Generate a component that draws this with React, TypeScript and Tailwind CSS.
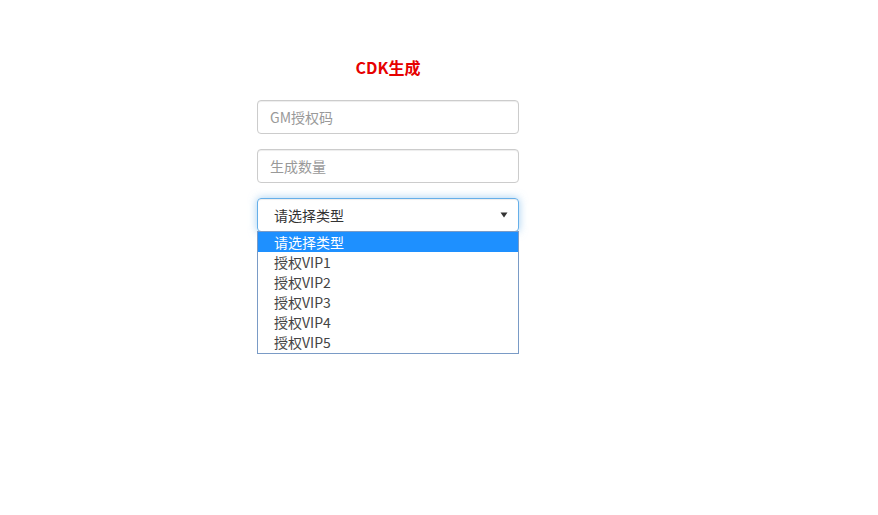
import React from "react";

const font = { fontFamily: '"Noto Sans CJK SC", "Noto Sans", sans-serif' };

export default function App() {
  const options = ["请选择类型", "授权VIP1", "授权VIP2", "授权VIP3", "授权VIP4", "授权VIP5"];
  return (
    <div className="min-h-[515px] w-[878px] bg-white font-['Noto_Sans_CJK_SC','Noto_Sans',sans-serif]">
      <div className="ml-[257px] w-[262px] pt-[57px]">
        <h1 className="m-0 h-[20px] text-center text-[16px] font-bold leading-[20px] text-[#e60000]">CDK生成</h1>
        <div className="mt-[23px] flex flex-col gap-[15px]">
          <input
            className="box-border h-[34px] w-full rounded-[4px] border border-[#cccccc] px-[12px] text-[14px] text-[#555] shadow-[inset_0_1px_1px_rgba(0,0,0,0.075)] outline-none placeholder:text-[#999]"
            placeholder="GM授权码"
          />
          <input
            className="box-border h-[34px] w-full rounded-[4px] border border-[#cccccc] px-[12px] text-[14px] text-[#555] shadow-[inset_0_1px_1px_rgba(0,0,0,0.075)] outline-none placeholder:text-[#999]"
            placeholder="生成数量"
          />
          <div className="relative">
            <div className="box-border flex h-[34px] w-full items-center justify-between rounded-[4px] border border-[#66afe9] pl-[16px] pr-[10px] text-[14px] text-[#333] shadow-[inset_0_1px_1px_rgba(0,0,0,0.075),0_0_8px_rgba(102,175,233,0.6)]">
              <span>请选择类型</span>
              <svg width="8" height="6" viewBox="0 0 8 6">
                <path d="M0.5 0.5 L7.5 0.5 L4 5.5 Z" fill="#333" />
              </svg>
            </div>
            <ul className="absolute left-0 top-[33px] m-0 box-border w-full list-none border border-[#7a9bc6] bg-white p-0 pb-[1px]">
              {options.map((o, i) => (
                <li
                  key={o}
                  className={
                    i === 0
                      ? "h-[20px] bg-[#1e90ff] pl-[16px] text-[14px] leading-[20px] text-white"
                      : "h-[20px] pl-[16px] text-[14px] leading-[20px] text-[#444]"
                  }
                  style={font}
                >
                  {o}
                </li>
              ))}
            </ul>
          </div>
        </div>
      </div>
    </div>
  );
}
